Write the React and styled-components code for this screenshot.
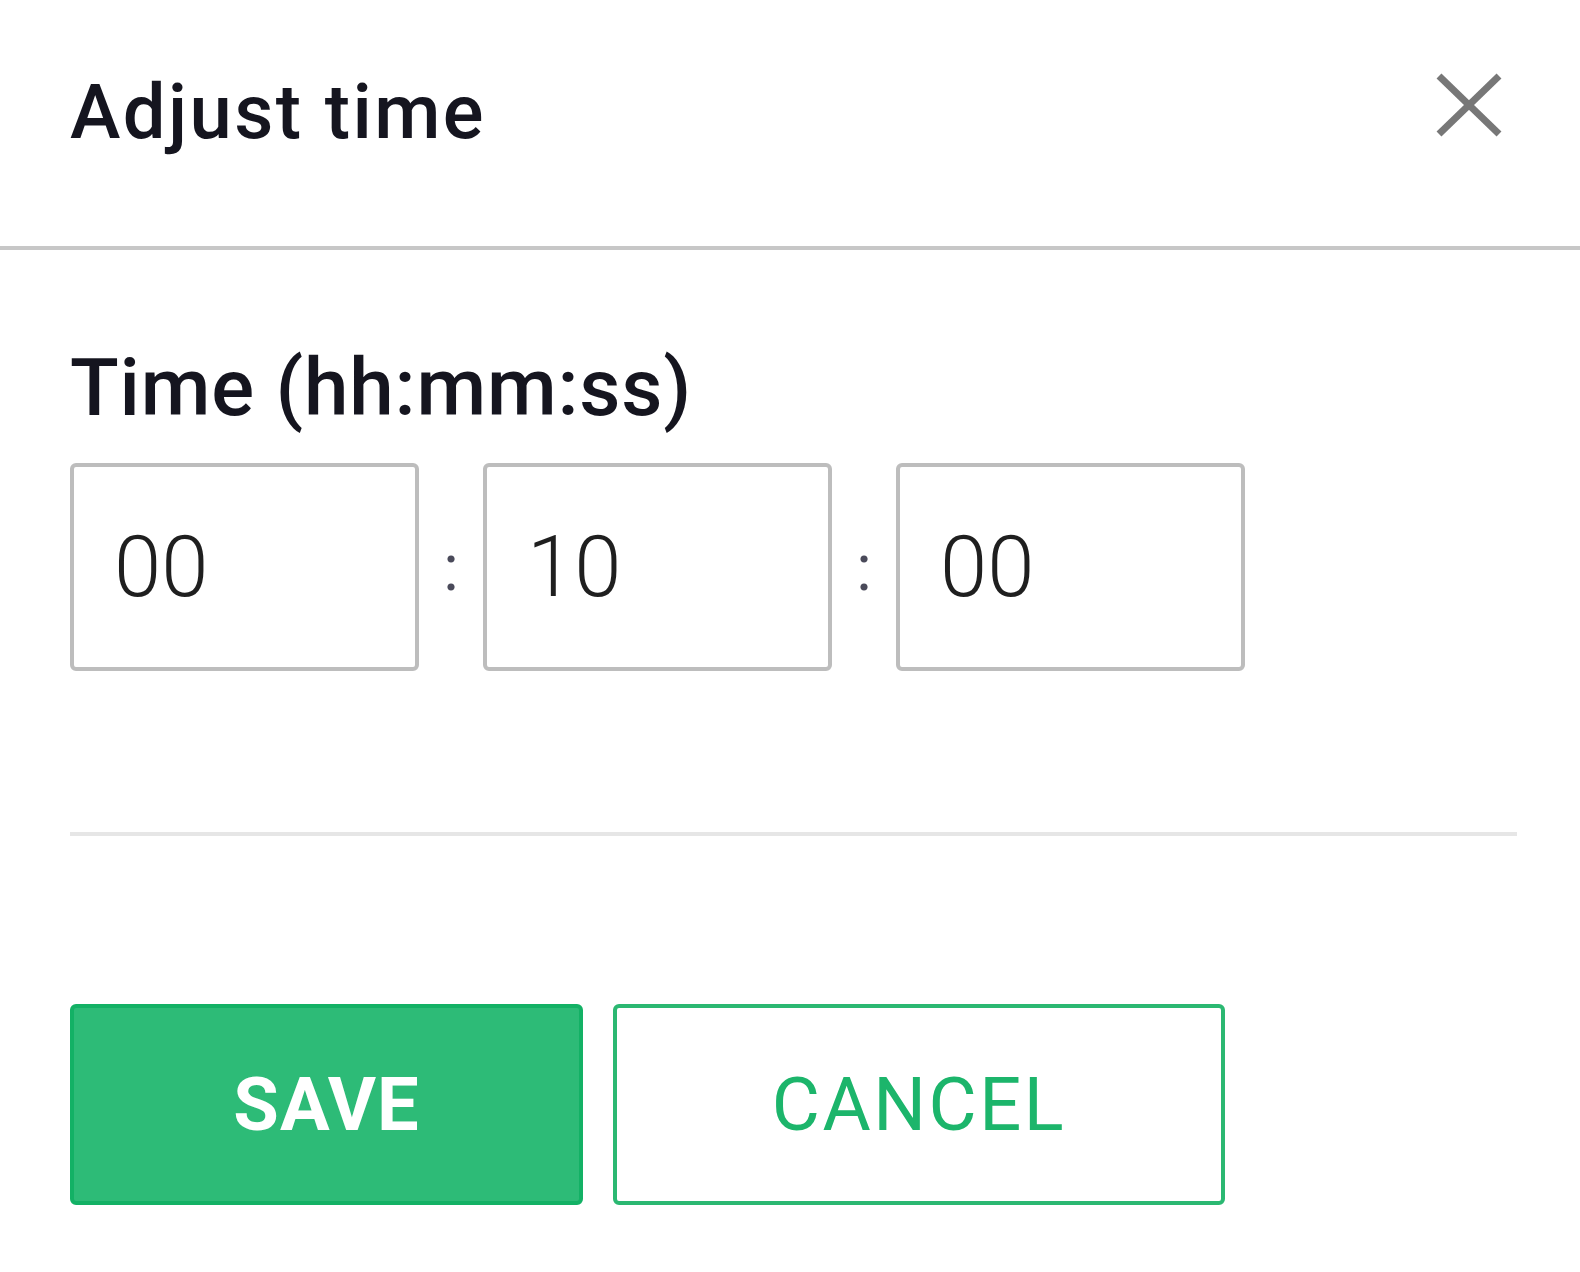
import React from "react";
import styled, { createGlobalStyle } from "styled-components";

const Global = createGlobalStyle`
  html, body { margin: 0; padding: 0; background: #ffffff; }
  body { font-family: Roboto, "Liberation Sans", Arial, sans-serif; }
  * { box-sizing: border-box; }
`;

const Dialog = styled.div`
  width: 1580px;
  min-height: 1272px;
  background: #ffffff;
`;

const Header = styled.header`
  display: flex;
  justify-content: space-between;
  align-items: flex-start;
  height: 250px;
  padding: 73px 78px 0 70px;
  border-bottom: 4px solid #c7c7c7;
`;

const Title = styled.h1`
  margin: 0;
  font-size: 76px;
  line-height: 78px;
  font-weight: 500;
  color: #15151f;
  letter-spacing: 2.4px;
`;

const CloseButton = styled.button`
  display: flex;
  padding: 0;
  border: none;
  background: transparent;
  cursor: pointer;
`;

const Body = styled.div`
  display: flex;
  flex-direction: column;
  padding: 98px 63px 0 70px;
`;

const Label = styled.label`
  font-size: 80px;
  line-height: 80px;
  font-weight: 500;
  color: #15151f;
  letter-spacing: 0.8px;
`;

const TimeRow = styled.div`
  display: flex;
  align-items: center;
  margin-top: 35px;
`;

const TimeInput = styled.input`
  width: 349px;
  height: 208px;
  border: 4px solid #bdbdbd;
  border-radius: 6px;
  padding: 0 0 0 40px;
  font-family: Roboto, "Liberation Sans", Arial, sans-serif;
  font-size: 85px;
  font-weight: 300;
  color: #1f1f1f;
  background: #ffffff;
  outline: none;
`;

const Colon = styled.span`
  width: 64px;
  text-align: center;
  font-size: 64px;
  line-height: 1;
  color: #4a4a5a;
  padding-top: 4px;
`;

const Divider = styled.hr`
  margin: 161px 0 0 0;
  border: none;
  height: 4px;
  background: #e6e6e6;
`;

const Actions = styled.div`
  display: flex;
  gap: 30px;
  margin-top: 168px;
`;

const Button = styled.button`
  display: flex;
  align-items: center;
  justify-content: center;
  width: ${(p) => p.$width}px;
  height: 201px;
  border-radius: 6px;
  border: 4px solid ${(p) => (p.$primary ? "#13b165" : "#2bb872")};
  background: ${(p) => (p.$primary ? "#2dbb77" : "#ffffff")};
  color: ${(p) => (p.$primary ? "#ffffff" : "#1cb56b")};
  font-family: Roboto, "Liberation Sans", Arial, sans-serif;
  font-size: 74px;
  font-weight: ${(p) => (p.$primary ? 700 : 400)};
  letter-spacing: ${(p) => (p.$primary ? "1px" : "2.5px")};
  text-transform: uppercase;
  cursor: pointer;
  padding: 0;
`;

function CloseIcon() {
  return (
    <svg width="66" height="64" viewBox="0 0 66 64" fill="none">
      <line x1="3" y1="3" x2="63" y2="61" stroke="#777777" strokeWidth="7" />
      <line x1="63" y1="3" x2="3" y2="61" stroke="#777777" strokeWidth="7" />
    </svg>
  );
}

export default function App() {
  return (
    <>
      <Global />
      <Dialog>
        <Header>
          <Title>Adjust time</Title>
          <CloseButton aria-label="Close">
            <CloseIcon />
          </CloseButton>
        </Header>
        <Body>
          <Label>Time (hh:mm:ss)</Label>
          <TimeRow>
            <TimeInput defaultValue="00" />
            <Colon>:</Colon>
            <TimeInput defaultValue="10" />
            <Colon>:</Colon>
            <TimeInput defaultValue="00" />
          </TimeRow>
          <Divider />
          <Actions>
            <Button $primary $width={513}>Save</Button>
            <Button $width={612}>Cancel</Button>
          </Actions>
        </Body>
      </Dialog>
    </>
  );
}
